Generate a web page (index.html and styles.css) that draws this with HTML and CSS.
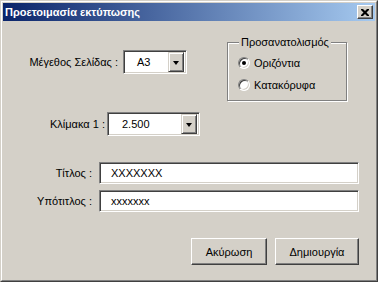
FILE: index.html
```html
<!DOCTYPE html>
<html lang="el">
<head>
    <meta charset="UTF-8">
    <title>Προετοιμασία εκτύπωσης</title>
    <link rel="stylesheet" href="styles.css">
</head>
<body>
    <div class="window">
        <div class="frame">
            <!-- Τίτλος παραθύρου -->
            <div class="titlebar">
                <span class="title">Προετοιμασία εκτύπωσης</span>
                <span class="close-btn">
                    <svg width="8" height="7" viewBox="0 0 8 7">
                        <path d="M0 0h2l2 2 2-2h2v1l-2.5 2.5L8 6v1H6L4 5 2 7H0V6l2.5-2.5L0 1z" fill="#000"/>
                    </svg>
                </span>
            </div>

            <div class="client">
                <!-- Μέγεθος + Προσανατολισμός -->
                <div class="row-top">
                    <div class="field field-size">
                        <label class="lbl lbl-size">Μέγεθος Σελίδας :</label>
                        <div class="combo combo-size">
                            <span class="combo-text">A3</span>
                            <span class="combo-btn"><span class="arrow"></span></span>
                        </div>
                    </div>

                    <div class="groupbox">
                        <div class="legend">Προσανατολισμός</div>
                        <div class="radio-row">
                            <span class="radio checked"></span>
                            <span>Οριζόντια</span>
                        </div>
                        <div class="radio-row">
                            <span class="radio"></span>
                            <span>Κατακόρυφα</span>
                        </div>
                    </div>
                </div>

                <!-- Κλίμακα -->
                <div class="field field-scale">
                    <label class="lbl lbl-scale">Κλίμακα 1 :</label>
                    <div class="combo combo-scale">
                        <span class="combo-text">2.500</span>
                        <span class="combo-btn"><span class="arrow"></span></span>
                    </div>
                </div>

                <!-- Τίτλοι -->
                <div class="field field-title">
                    <label class="lbl lbl-title">Τίτλος :</label>
                    <div class="textbox">XXXXXXX</div>
                </div>
                <div class="field field-subtitle">
                    <label class="lbl lbl-title">Υπότιτλος :</label>
                    <div class="textbox">xxxxxxx</div>
                </div>

                <!-- Κουμπιά -->
                <div class="buttons">
                    <button class="btn btn-cancel">Ακύρωση</button>
                    <button class="btn btn-create">Δημιουργία</button>
                </div>
            </div>
        </div>
    </div>
</body>
</html>
```

FILE: styles.css
```css
/* Γενικό */
body {
    margin: 0;
    font-family: "Liberation Sans", Arial, sans-serif;
    font-size: 11px;
    color: #000;
    background: #d4d0c8;
}

.window {
    width: 378px;
    height: 282px;
    box-sizing: border-box;
    border: 1px solid;
    border-color: #d4d0c8 #404040 #404040 #d4d0c8;
}

.frame {
    height: 100%;
    box-sizing: border-box;
    border: 1px solid;
    border-color: #fff #808080 #808080 #fff;
    padding: 1px;
    background: #d4d0c8;
}

/* Μπάρα τίτλου */
.titlebar {
    height: 18px;
    display: flex;
    align-items: center;
    justify-content: space-between;
    background: linear-gradient(to right, #0a246a, #a6caf0);
}

.title {
    color: #fff;
    font-weight: bold;
    padding-left: 2px;
    margin-top: -1px;
}

.close-btn {
    width: 16px;
    height: 14px;
    box-sizing: border-box;
    margin-right: 2px;
    display: flex;
    align-items: center;
    justify-content: center;
    background: #d4d0c8;
    border: 1px solid;
    border-color: #fff #404040 #404040 #fff;
    box-shadow: inset -1px -1px 0 #808080;
}

.close-btn svg {
    display: block;
    margin-left: -1px;
}

/* Περιοχή περιεχομένου */
.client {
    padding-top: 21px;
}

.field {
    display: flex;
    align-items: center;
}

.lbl {
    text-align: right;
    flex-shrink: 0;
}

/* Combo box */
.combo {
    height: 24px;
    box-sizing: border-box;
    display: flex;
    align-items: center;
    justify-content: space-between;
    background: #fff;
    border: 1px solid;
    border-color: #808080 #fff #fff #808080;
    box-shadow: inset 1px 1px 0 #404040, inset -1px -1px 0 #d4d0c8;
    padding: 1px 2px 1px 0;
}

.combo-btn {
    width: 16px;
    height: 20px;
    box-sizing: border-box;
    background: #d4d0c8;
    border: 1px solid;
    border-color: #d4d0c8 #404040 #404040 #d4d0c8;
    box-shadow: inset 1px 1px 0 #fff, inset -1px -1px 0 #808080;
    display: flex;
    align-items: center;
    justify-content: center;
}

.arrow {
    width: 0;
    height: 0;
    border-left: 3.5px solid transparent;
    border-right: 3.5px solid transparent;
    border-top: 4px solid #000;
    margin-top: 1px;
}

/* Πρώτη σειρά */
.row-top {
    display: flex;
    align-items: flex-start;
}

.field-size {
    margin-top: 8px;
}

.lbl-size {
    width: 115px;
    margin-right: 5px;
}

.combo-size {
    width: 64px;
}

.combo-size .combo-text {
    padding-left: 13px;
}

/* Ομάδα προσανατολισμού */
.groupbox {
    margin-left: 40px;
    width: 120px;
    height: 59px;
    box-sizing: border-box;
    border: 1px solid #808080;
    box-shadow: inset 1px 1px 0 #fff, 1px 1px 0 #fff;
    padding-left: 10px;
}

.legend {
    width: fit-content;
    background: #d4d0c8;
    margin-top: -7px;
    margin-left: 1px;
    padding: 0 2px;
    line-height: 13px;
}

.radio-row {
    display: flex;
    align-items: center;
    height: 13px;
    margin-top: 7px;
}

.radio-row + .radio-row {
    margin-top: 9px;
}

.radio {
    width: 12px;
    height: 12px;
    box-sizing: border-box;
    border-radius: 50%;
    background: #fff;
    border: 1px solid;
    border-color: #808080 #fff #fff #808080;
    box-shadow: inset 1px 1px 0 #404040, inset -1px -1px 0 #d4d0c8;
    margin-right: 4px;
    display: flex;
    align-items: center;
    justify-content: center;
}

.radio.checked::after {
    content: "";
    width: 4px;
    height: 4px;
    border-radius: 50%;
    background: #000;
}

/* Κλίμακα */
.field-scale {
    margin-top: 11px;
}

.lbl-scale {
    width: 102px;
    margin-right: 2px;
}

.combo-scale {
    width: 93px;
}

.combo-scale .combo-text {
    padding-left: 14px;
}

/* Πεδία κειμένου */
.field-title {
    margin-top: 26px;
}

.field-subtitle {
    margin-top: 6px;
}

.lbl-title {
    width: 89px;
    margin-right: 7px;
}

.textbox {
    width: 260px;
    height: 22px;
    box-sizing: border-box;
    background: #fff;
    border: 1px solid;
    border-color: #808080 #fff #fff #808080;
    box-shadow: inset 1px 1px 0 #404040, inset -1px -1px 0 #d4d0c8;
    padding-left: 11px;
    line-height: 20px;
}

/* Κουμπιά */
.buttons {
    display: flex;
    justify-content: flex-end;
    gap: 8px;
    margin-top: 26px;
    padding-right: 16px;
}

.btn {
    height: 27px;
    box-sizing: border-box;
    font-family: inherit;
    font-size: 11px;
    color: #000;
    background: #d4d0c8;
    border: 1px solid;
    border-color: #fff #404040 #404040 #fff;
    box-shadow: inset -1px -1px 0 #808080;
    padding: 0;
}

.btn-cancel {
    width: 76px;
}

.btn-create {
    width: 84px;
}
```
